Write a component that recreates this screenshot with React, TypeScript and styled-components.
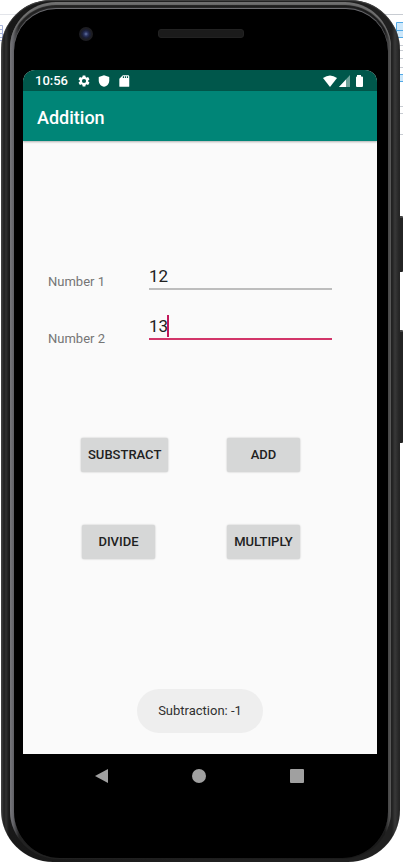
import React, { useState } from "react";
import styled, { createGlobalStyle } from "styled-components";

const GlobalStyle = createGlobalStyle`
  * { box-sizing: border-box; }
  html, body, #root { height: 100%; }
  body {
    margin: 0;
    background: #fff;
    font-family: Roboto, "Noto Sans", sans-serif;
    overflow: hidden;
  }
`;

const Desktop = styled.div`
  position: relative;
  height: 100%;
  padding: 0 3px 3px 1px;
`;

const Backdrop = styled.svg<{ $side: "left" | "right" }>`
  position: absolute;
  top: 0;
  ${(p) => p.$side}: 0;
`;

const SideKey = styled.span<{ $top: number; $height: number }>`
  position: absolute;
  top: ${(p) => p.$top}px;
  right: 0;
  width: 6px;
  height: ${(p) => p.$height}px;
  background: #242424;
  border-top: 2px solid #454545;
  border-radius: 0 1px 1px 0;
`;

const Shell = styled.div`
  position: relative;
  height: 100%;
  padding: 2px 9px 3px 9px;
  border-radius: 50px 50px 52px 52px;
  background: linear-gradient(to right, #484848 0, #202020 3px, #303030 5px, #181818 8px, #202020 50%, #202020 calc(100% - 8px), #383838 calc(100% - 5px), #202020 100%);
  box-shadow: inset 0 1px 1px #444;
`;

const Rim = styled.div`
  height: 100%;
  padding: 7px 3px 1px 4px;
  border-radius: 46px 46px 48px 48px;
  background: linear-gradient(to right, #77777c 0, #66666b 3px, #222 9px, #1a1a1a calc(100% - 6px), #4a4a4a calc(100% - 2px), #5a5a5a 100%);
  box-shadow: inset 0 3px 1px #707070;
`;

const Glass = styled.div`
  display: flex;
  flex-direction: column;
  height: 100%;
  padding: 0 10px 0 9px;
  border-radius: 42px 42px 46px 46px;
  background: #000;
  box-shadow: 0 -1px 1px #77777c;
`;

const Forehead = styled.div`
  position: relative;
  flex: 0 0 61px;
  display: flex;
  justify-content: center;
  padding-top: 20px;
`;

const Camera = styled.span`
  position: absolute;
  left: 56px;
  top: 18px;
  width: 14px;
  height: 14px;
  border-radius: 50%;
  border: 2px solid #1d1d22;
  background: radial-gradient(circle, #6575a5 0, #2b3460 2px, #191d33 4px, #242635 6px);
`;

const Speaker = styled.span`
  width: 86px;
  height: 9px;
  border-radius: 3px;
  border: 1px solid #222;
  background: #1b1b1b;
`;

const Screen = styled.main`
  flex: 1;
  display: flex;
  flex-direction: column;
  min-height: 0;
  margin-right: 1px;
  border-radius: 12px 12px 0 0;
  overflow: hidden;
  background: #fafafa;
`;

const StatusBar = styled.div`
  display: flex;
  align-items: center;
  flex: 0 0 21px;
  padding: 0 11px 0 12px;
  background: #00574b;
  color: #fff;
`;

const Clock = styled.span`
  font-size: 13px;
  line-height: 21px;
  font-weight: 500;
  margin-right: 9px;
`;

const StatusIcons = styled.div`
  display: flex;
  align-items: center;
  gap: 6px;
`;

const SignalIcons = styled.div`
  display: flex;
  align-items: center;
  margin-left: auto;
`;

const AppBar = styled.header`
  display: flex;
  align-items: center;
  flex: 0 0 50px;
  padding: 3px 14px 0;
  background: #008577;
  box-shadow: 0 1px 2px rgba(0, 0, 0, 0.3);
`;

const Title = styled.h1`
  margin: 0;
  font-size: 18px;
  line-height: 24px;
  font-weight: 500;
  color: #fff;
`;

const Content = styled.form`
  flex: 1;
  display: flex;
  flex-direction: column;
  padding: 119px 0 21px;
`;

const Fields = styled.div`
  display: flex;
  flex-direction: column;
  gap: 20px;
  padding: 0 45px 0 25px;
`;

const Field = styled.div<{ $drop: number }>`
  display: grid;
  grid-template-columns: 101px 1fr;
  align-items: start;

  label {
    padding-top: ${(p) => p.$drop}px;
    font-size: 13px;
    line-height: 16px;
    color: #757575;
  }
`;

const InputBox = styled.div<{ $active?: boolean }>`
  display: flex;
  align-items: center;
  height: 30px;
  padding-top: 4px;
  border-bottom: 2px solid ${(p) => (p.$active ? "#d23569" : "#bdbdbd")};
`;

const NumberInput = styled.input<{ $short?: boolean }>`
  width: ${(p) => (p.$short ? "19px" : "100%")};
  height: 22px;
  padding: 0;
  border: 0;
  outline: 0;
  background: transparent;
  font-family: inherit;
  font-size: 17px;
  line-height: 22px;
  color: #212121;
  caret-color: transparent;
`;

const Caret = styled.span`
  width: 2px;
  height: 22px;
  margin-left: -1px;
  background: #c2185b;
`;

const Actions = styled.div`
  display: grid;
  grid-template-columns: 146px 1fr;
  justify-items: start;
  row-gap: 53px;
  padding: 91px 58px 0;
`;

const ActionButton = styled.button<{ $inset?: boolean }>`
  min-width: 73px;
  height: 34px;
  margin-left: ${(p) => (p.$inset ? "1px" : "0")};
  padding: 0 7px;
  border: 0;
  border-radius: 2px;
  background: #d6d7d7;
  box-shadow: 0 0 2px rgba(0, 0, 0, 0.25);
  color: #212121;
  font-family: inherit;
  font-size: 13px;
  line-height: 16px;
  font-weight: 500;
  text-transform: uppercase;
`;

const Toast = styled.output`
  align-self: center;
  margin-top: auto;
  padding: 14px 21px;
  border-radius: 22px;
  background: #eee;
  font-size: 13px;
  line-height: 16px;
  color: #303030;
`;

const NavBar = styled.nav`
  flex: 0 0 104px;
  display: flex;
  justify-content: center;
  align-items: flex-start;
  gap: 82px;
  padding: 14px 3px 0 0;
`;

const NavButton = styled.button`
  display: flex;
  padding: 0;
  border: 0;
  background: none;
`;

export default function App() {
  const [first, setFirst] = useState("12");
  const [second, setSecond] = useState("13");
  const [message, setMessage] = useState("Subtraction: -1");
  const a = Number(first);
  const b = Number(second);

  return (
    <>
      <GlobalStyle />
      <Desktop>
        <Backdrop $side="left" width="40" height="200" aria-hidden="true">
          <path d="M0 14.5H40" stroke="#e3e5ea" />
          <path d="M0 25.5H2.5V40.5H0M0 29.5H2M0 33.5H2M0 37.5H2" fill="none" stroke="#a9b4dc" />
        </Backdrop>
        <Backdrop $side="right" width="40" height="200" aria-hidden="true">
          <path d="M0 14.5H40M34 45.5H40M34 50.5H40M34 58.5H40M34 67.5H40M34 106.5H40M34 113.5H40M34 134.5H40" stroke="#c8ccd2" />
          <path d="M33.500 22.500H41V30.500H33.500ZM33.500 30.500H41V37.500H33.500ZM33.500 74.500H41V81.500H33.500Z" fill="#cde8fb" stroke="#52a9e6" />
        </Backdrop>
        <SideKey $top={216} $height={56} />
        <SideKey $top={330} $height={113} />
        <Shell>
          <Rim>
            <Glass>
              <Forehead>
                <Camera />
                <Speaker />
              </Forehead>
              <Screen>
                <StatusBar>
                  <Clock>10:56</Clock>
                  <StatusIcons>
                    <svg width="14" height="14" viewBox="0 0 24 24" fill="#fff">
                      <path d="M19.140 12.940a7 7 0 0 0 0-1.880l2.030-1.580a.5.5 0 0 0 .12-.61l-1.920-3.320a.5.5 0 0 0-.59-.22l-2.390.96a7 7 0 0 0-1.620-.94l-.36-2.540A.5.5 0 0 0 13.930 2.400h-3.840a.5.5 0 0 0-.47.410l-.36 2.540a7 7 0 0 0-1.620.94l-2.390-.96a.5.5 0 0 0-.59.22L2.740 8.870a.5.5 0 0 0 .12.61l2.030 1.580a7 7 0 0 0 0 1.880l-2.030 1.580a.5.5 0 0 0-.12.61l1.920 3.320c.12.22.37.29.59.22l2.390-.96c.5.38 1.030.7 1.620.94l.36 2.540c.05.24.24.41.48.41h3.840c.24 0 .44-.17.47-.41l.36-2.540a7 7 0 0 0 1.620-.94l2.390.96c.22.08.47 0 .59-.22l1.920-3.320a.5.5 0 0 0-.12-.61ZM12 15.600a3.600 3.600 0 1 1 0-7.200 3.600 3.600 0 0 1 0 7.200Z" />
                    </svg>
                    <svg width="14" height="14" viewBox="0 0 24 24" fill="#fff">
                      <path d="M12 2 3 5v6c0 5.550 3.840 9.740 9 11 5.160-1.260 9-5.450 9-11V5Z" />
                    </svg>
                    <svg width="14" height="14" viewBox="0 0 24 24" fill="#fff">
                      <path d="M19 2h-9L4 8v13a1 1 0 0 0 1 1h15a1 1 0 0 0 1-1V4a2 2 0 0 0-2-2Zm-7 5h-2V4h2Zm3.500 0h-2V4h2Zm3.500 0h-2V4h2Z" />
                    </svg>
                  </StatusIcons>
                  <SignalIcons>
                    <svg width="14" height="12" viewBox="0 0 14 12" fill="#fff">
                      <path d="M0 3Q7-2 14 3L7 12Z" />
                    </svg>
                    <svg width="15" height="12" viewBox="0 0 15 12">
                      <path d="M13 0v12H2Z" fill="#6fa29a" />
                      <path d="M9 4.400V12H2Z" fill="#fff" />
                    </svg>
                    <svg width="14" height="12" viewBox="0 0 14 12" fill="#fff">
                      <path d="M5 1.500V0h4v1.500h1q1 0 1 1V11q0 1-1 1H5q-1 0-1-1V2.500q0-1 1-1Z" />
                    </svg>
                  </SignalIcons>
                </StatusBar>
                <AppBar>
                  <Title>Addition</Title>
                </AppBar>
                <Content onSubmit={(e) => e.preventDefault()}>
                  <Fields>
                    <Field $drop={14}>
                      <label htmlFor="first">Number 1</label>
                      <InputBox>
                        <NumberInput id="first" value={first} onChange={(e) => setFirst(e.target.value)} />
                      </InputBox>
                    </Field>
                    <Field $drop={21}>
                      <label htmlFor="second">Number 2</label>
                      <InputBox $active>
                        <NumberInput id="second" $short value={second} onChange={(e) => setSecond(e.target.value)} />
                        <Caret />
                      </InputBox>
                    </Field>
                  </Fields>
                  <Actions>
                    <ActionButton type="button" onClick={() => setMessage(`Subtraction: ${a - b}`)}>Substract</ActionButton>
                    <ActionButton type="button" onClick={() => setMessage(`Addition: ${a + b}`)}>Add</ActionButton>
                    <ActionButton type="button" $inset onClick={() => setMessage(`Division: ${a / b}`)}>Divide</ActionButton>
                    <ActionButton type="button" onClick={() => setMessage(`Multiplication: ${a * b}`)}>Multiply</ActionButton>
                  </Actions>
                  <Toast>{message}</Toast>
                </Content>
              </Screen>
              <NavBar>
                <NavButton aria-label="Back">
                  <svg width="16" height="16" viewBox="0 0 16 16"><path d="M15 1v14L2 8Z" fill="#a0a0a0" /></svg>
                </NavButton>
                <NavButton aria-label="Home">
                  <svg width="16" height="16" viewBox="0 0 16 16"><circle cx="8" cy="8" r="7" fill="#a0a0a0" /></svg>
                </NavButton>
                <NavButton aria-label="Overview">
                  <svg width="16" height="16" viewBox="0 0 16 16"><rect x="1" y="1" width="14" height="14" rx="1" fill="#a0a0a0" /></svg>
                </NavButton>
              </NavBar>
            </Glass>
          </Rim>
        </Shell>
      </Desktop>
    </>
  );
}
